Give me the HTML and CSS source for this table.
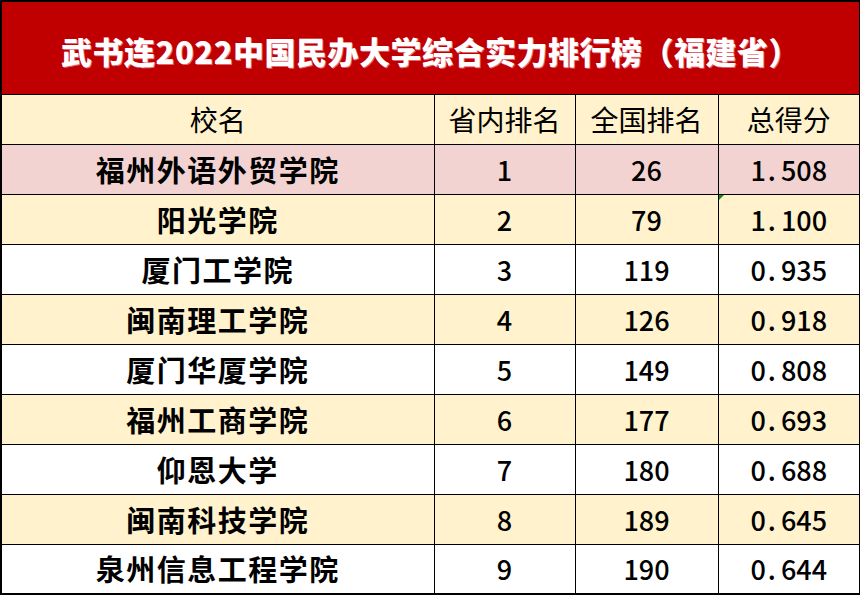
FILE: index.html
```html
<!DOCTYPE html>
<html lang="zh-CN">
<head>
<meta charset="utf-8">
<title>武书连2022中国民办大学综合实力排行榜（福建省）</title>
<link rel="stylesheet" href="styles.css">
</head>
<body>
<table class="rank">
  <colgroup>
    <col class="c-name"><col class="c-prov"><col class="c-nat"><col class="c-score">
  </colgroup>
  <thead>
    <tr class="title-row"><th colspan="4" class="title">武书连2022中国民办大学综合实力排行榜（福建省）</th></tr>
    <tr class="head-row"><th>校名</th><th>省内排名</th><th>全国排名</th><th>总得分</th></tr>
  </thead>
  <tbody>
    <tr class="pink"><td class="name">福州外语外贸学院</td><td class="num">1</td><td class="num">26</td><td class="num">1<span class="dot">.</span>508</td></tr>
    <tr class="yellow"><td class="name">阳光学院</td><td class="num">2</td><td class="num">79</td><td class="num flag">1<span class="dot">.</span>100</td></tr>
    <tr class="white"><td class="name">厦门工学院</td><td class="num">3</td><td class="num">119</td><td class="num">0<span class="dot">.</span>935</td></tr>
    <tr class="yellow"><td class="name">闽南理工学院</td><td class="num">4</td><td class="num">126</td><td class="num">0<span class="dot">.</span>918</td></tr>
    <tr class="white"><td class="name">厦门华厦学院</td><td class="num">5</td><td class="num">149</td><td class="num">0<span class="dot">.</span>808</td></tr>
    <tr class="yellow"><td class="name">福州工商学院</td><td class="num">6</td><td class="num">177</td><td class="num">0<span class="dot">.</span>693</td></tr>
    <tr class="white"><td class="name">仰恩大学</td><td class="num">7</td><td class="num">180</td><td class="num">0<span class="dot">.</span>688</td></tr>
    <tr class="yellow"><td class="name">闽南科技学院</td><td class="num">8</td><td class="num">189</td><td class="num">0<span class="dot">.</span>645</td></tr>
    <tr class="white"><td class="name">泉州信息工程学院</td><td class="num">9</td><td class="num">190</td><td class="num">0<span class="dot">.</span>644</td></tr>
  </tbody>
</table>
</body>
</html>
```
FILE: styles.css
```css
html, body {
  margin: 0;
  padding: 0;
  background: #ffffff;
}

body {
  font-family: "Noto Sans CJK SC", "Noto Sans", sans-serif;
  color: #000;
}

.rank {
  border-collapse: collapse;
  table-layout: fixed;
  width: 859px;
  border: 2px solid #000;
}

.c-name { width: 433px; }
.c-prov { width: 141px; }
.c-nat { width: 143px; }
.c-score { width: 142px; }

.rank th,
.rank td {
  border: 1px solid #000;
  padding: 0;
  text-align: center;
  vertical-align: middle;
  line-height: 1;
  height: 50px;
  box-sizing: border-box;
}

.title-row .title {
  height: 93px;
  background: #c00000;
  color: #ffffff;
  font-size: 31px;
  font-weight: 900;
  letter-spacing: 0.5px;
  padding-top: 6px;
  text-shadow: 1px 1px 0 rgba(255, 190, 220, 0.55);
  border-bottom: 1px solid #000;
}

.head-row th {
  background: #fff2cc;
  font-weight: 400;
  font-size: 28px;
}

.name {
  font-size: 29px;
  font-weight: 700;
  letter-spacing: 1.5px;
}

.num {
  font-size: 27px;
  font-weight: 500;
}

.dot {
  display: inline-block;
  width: 0.56em;
  text-align: left;
  padding-left: 2px;
  box-sizing: border-box;
}

.pink td { background: #f2d3d1; }
.yellow td { background: #fff2cc; }
.white td { background: #ffffff; }

.flag {
  position: relative;
}

.flag::before {
  content: "";
  position: absolute;
  left: 0;
  top: 0;
  width: 0;
  height: 0;
  border-top: 5px solid #1a8a1a;
  border-right: 5px solid transparent;
}
```
